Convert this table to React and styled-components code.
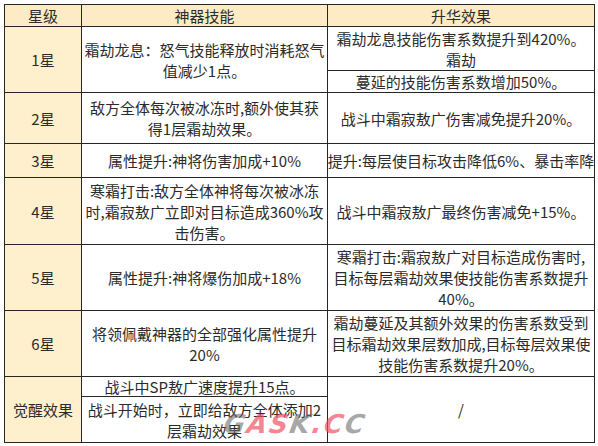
import styled, { createGlobalStyle } from "styled-components";

const GlobalStyle = createGlobalStyle`
  html, body {
    margin: 0;
    padding: 0;
    background: #ffffff;
  }
`;

const Page = styled.div`
  position: relative;
  width: 598px;
  height: 446px;
  padding: 4px 0 0 4px;
  box-sizing: border-box;
  overflow: hidden;
  font-family: "Noto Sans CJK SC", "Noto Sans", sans-serif;
  color: #2b2b2b;
`;

// 表格: 星级 / 神器技能 / 升华效果
const Grid = styled.div`
  display: grid;
  grid-template-columns: 76px 245px 266px;
  grid-template-rows: 21px 43px 21px 50px 33px 66px 65px 65px 19px 45px;
  gap: 1px;
  padding: 1px;
  width: max-content;
  background: #262626;
  font-size: 15px;
  line-height: 21px;
`;

const Cell = styled.div`
  grid-column: ${(p) => p.$c};
  grid-row: ${(p) => p.$r} / span ${(p) => p.$rs || 1};
  display: flex;
  flex-direction: column;
  justify-content: center;
  align-items: center;
  overflow: hidden;
  white-space: nowrap;
  line-height: ${(p) => p.$lh || 21}px;
  background: ${(p) => (p.$head ? "#fdebc6" : p.$tint ? "#fef0cd" : "#ffffff")};
`;

const Line = styled.div`
  flex: none;
`;

const Watermark = styled.div`
  position: absolute;
  left: 224px;
  top: 409px;
  font-family: "DejaVu Sans", sans-serif;
  font-weight: 700;
  font-style: italic;
  font-size: 26px;
  letter-spacing: 2px;
  transform: skewX(-10deg);
  pointer-events: none;
`;

const Mark = styled.span`
  color: ${(p) => (p.$pink ? "rgba(240, 80, 100, 0.7)" : "rgba(110, 110, 110, 0.6)")};
`;

const rows = [
  { c: 1, r: 1, head: true, t: ["星级"] },
  { c: 2, r: 1, head: true, t: ["神器技能"] },
  { c: 3, r: 1, head: true, t: ["升华效果"] },

  { c: 1, r: 2, rs: 2, tint: true, t: ["1星"] },
  { c: 2, r: 2, rs: 2, t: ["霜劫龙息：怒气技能释放时消耗怒气", "值减少1点。"] },
  { c: 3, r: 2, t: ["霜劫龙息技能伤害系数提升到420%。", "霜劫"] },
  { c: 3, r: 3, lh: 20, t: ["蔓延的技能伤害系数增加50%。"] },

  { c: 1, r: 4, tint: true, t: ["2星"] },
  { c: 2, r: 4, t: ["敌方全体每次被冰冻时,额外使其获", "得1层霜劫效果。"] },
  { c: 3, r: 4, t: ["战斗中霜寂敖广伤害减免提升20%。"] },

  { c: 1, r: 5, tint: true, t: ["3星"] },
  { c: 2, r: 5, t: ["属性提升:神将伤害加成+10%"] },
  { c: 3, r: 5, t: ["提升:每层使目标攻击降低6%、暴击率降"] },

  { c: 1, r: 6, tint: true, t: ["4星"] },
  {
    c: 2,
    r: 6,
    t: [
      "寒霜打击:敌方全体神将每次被冰冻",
      "时,霜寂敖广立即对目标造成360%攻",
      "击伤害。",
    ],
  },
  { c: 3, r: 6, t: ["战斗中霜寂敖广最终伤害减免+15%。"] },

  { c: 1, r: 7, tint: true, t: ["5星"] },
  { c: 2, r: 7, t: ["属性提升:神将爆伤加成+18%"] },
  {
    c: 3,
    r: 7,
    t: [
      "寒霜打击:霜寂敖广对目标造成伤害时,",
      "目标每层霜劫效果使技能伤害系数提升",
      "40%。",
    ],
  },

  { c: 1, r: 8, tint: true, t: ["6星"] },
  { c: 2, r: 8, t: ["将领佩戴神器的全部强化属性提升", "20%"] },
  {
    c: 3,
    r: 8,
    t: [
      "霜劫蔓延及其额外效果的伤害系数受到",
      "目标霜劫效果层数加成,目标每层效果使",
      "技能伤害系数提升20%。",
    ],
  },

  { c: 1, r: 9, rs: 2, tint: true, t: ["觉醒效果"] },
  { c: 2, r: 9, lh: 19, t: ["战斗中SP敖广速度提升15点。"] },
  { c: 2, r: 10, t: ["战斗开始时，立即给敌方全体添加2", "层霜劫效果"] },
  { c: 3, r: 9, rs: 2, t: ["/"] },
];

export default function App() {
  return (
    <Page>
      <GlobalStyle />
      <Grid>
        {rows.map((cell, i) => (
          <Cell
            key={i}
            $c={cell.c}
            $r={cell.r}
            $rs={cell.rs}
            $lh={cell.lh}
            $head={cell.head}
            $tint={cell.tint}
          >
            {cell.t.map((line, j) => (
              <Line key={j}>{line}</Line>
            ))}
          </Cell>
        ))}
      </Grid>
      <Watermark>
        <Mark>G</Mark>
        <Mark $pink>A</Mark>
        <Mark $pink>S</Mark>
        <Mark>K</Mark>
        <Mark $pink>.</Mark>
        <Mark $pink>C</Mark>
        <Mark>C</Mark>
      </Watermark>
    </Page>
  );
}
